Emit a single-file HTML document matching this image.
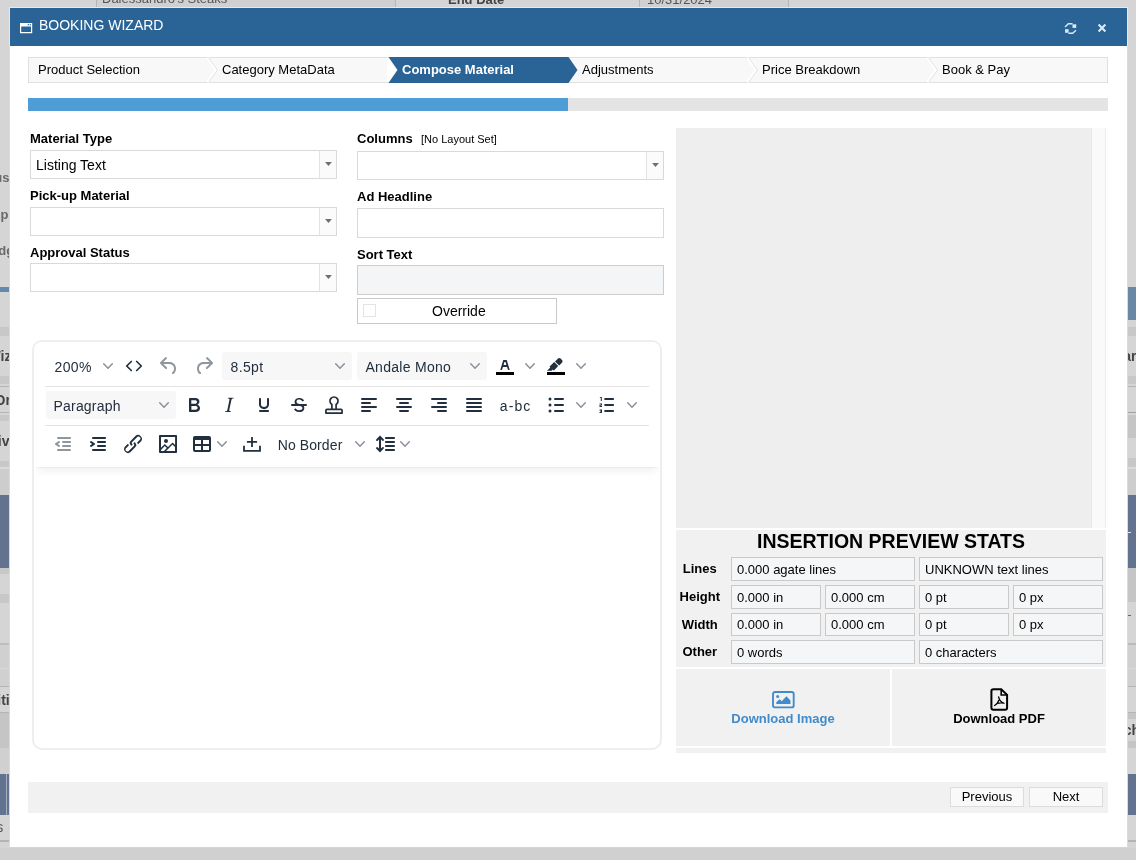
<!DOCTYPE html>
<html>
<head>
<meta charset="utf-8">
<title>Booking Wizard</title>
<style>
*{box-sizing:border-box;margin:0;padding:0}
html,body{width:1136px;height:860px;overflow:hidden}
body{font-family:"Liberation Sans",sans-serif;font-size:13px;color:#000;background:#d5d5d5;position:relative}
.abs{position:absolute}
/* ---------- backdrop ---------- */
#bg{position:absolute;left:0;top:0;width:1136px;height:860px;overflow:hidden;background:#d5d5d5;will-change:transform}
#bg div{position:absolute}
#bg .t{font-weight:bold;color:#444;font-size:14px;line-height:16px;white-space:nowrap}
#bg .n{color:#555;font-size:13px;line-height:16px;white-space:nowrap}
#bg .r{width:100px;text-align:right}
#bg .g{color:#6a6a6a}
#bg .bd{background:#c8c8c8}
#bg .li{background:#b4b4b4}
/* ---------- dialog ---------- */
#dlg{position:absolute;left:9px;top:7px;width:1119px;height:841px;background:#fff;will-change:transform;border:1px solid #dbdbdb;border-right-color:#dbdbdb;border-bottom-color:#d4d4d4}
#dlg>div,#dlg>svg{position:absolute}
/* dialog-relative coords = page coords minus (10,8) */
#title{left:0;top:0;width:1117px;height:38px;background:#2a6496}
#title .txt{position:absolute;left:29px;top:9px;font-size:14px;line-height:16px;color:#fff;white-space:nowrap}
/* steps */
#steps{left:18px;top:49px;width:1080px;height:26px}
#steps .lbl{position:absolute;top:5px;font-size:13px;line-height:16px;white-space:nowrap;color:#000}
/* progress */
#prog{left:18px;top:90px;width:1080px;height:13px;background:#e4e4e4}
#prog i{display:block;width:540px;height:13px;background:#4f9dd7}
/* form */
.lab{font-weight:bold;font-size:13px;line-height:16px;white-space:nowrap}
.sel{height:28px;border:1px solid #d9d9d9;background:#fff}
.sel .v{position:absolute;left:5px;top:6px;font-size:14px;line-height:16px;white-space:nowrap}
.sel .b{position:absolute;right:0;top:0;width:17px;height:27px;border-left:1px solid #e3e3e3;background:#fbfbfb}
.sel .b:after{content:"";position:absolute;left:4.900px;top:10.800px;width:7.200px;height:4.300px;background:#6e6e6e;clip-path:polygon(0 0,100% 0,50% 100%)}
.inp{border:1px solid #d9d9d9;background:#fff}
/* editor */
#ed{left:22px;top:332px;width:630px;height:410px;border:2px solid #eee;border-radius:10px;background:#fff;overflow:hidden}
#edh{position:absolute;left:0;top:0;width:626px;height:125px;background:#fff;box-shadow:0 2px 2px -2px rgba(34,47,62,.1),0 8px 8px -4px rgba(34,47,62,.07)}
#edh>*{position:absolute}
#edh .ln{left:11px;width:604px;height:1px;background:#e3e3e3}
#edh .tx{font-size:14px;line-height:28px;color:#222f3e;white-space:nowrap}
#edh .sb{width:130px;height:28px;background:#f7f7f7;border-radius:3px}
#edh .ic{width:24px;height:24px}
#edh .chv{width:10px;height:10px}
#edh .dis{opacity:.5}
/* stats */
#stats>div{position:absolute;white-space:nowrap}
#stats .h{left:0;top:0px;width:430px;text-align:center;font-weight:bold;font-size:19.500px;line-height:22px}
#stats .sl{left:0;width:47.600px;text-align:center;font-weight:bold;font-size:13px;line-height:16px}
#stats .sv{border:1px solid #c9c9c9;background:#f5f6f8;font-size:13px;line-height:16px;padding:4px 0 0 5px}
.dl{background:#f1f1f1}
.dl .dt{position:absolute;left:0;width:100%;text-align:center;font-weight:bold;font-size:13px;line-height:16px;white-space:nowrap}
.fb{position:absolute;top:5px;width:74px;height:20px;border:1px solid #dcdcdc;background:#f9f9f9;text-align:center;font-size:13px;line-height:18px;white-space:nowrap}
</style>
</head>
<body>
<div id="bg">
<!-- top strip -->
<div style="left:97px;top:0;width:298px;height:7px;background:#d0d0d0"></div>
<div style="left:640px;top:0;width:148px;height:7px;background:#d0d0d0"></div>
<div style="left:96px;top:0;width:1px;height:7px;background:#b6b6b6"></div>
<div style="left:395px;top:0;width:1px;height:7px;background:#b6b6b6"></div>
<div style="left:639px;top:0;width:1px;height:7px;background:#b6b6b6"></div>
<div style="left:788px;top:0;width:1px;height:7px;background:#b6b6b6"></div>
<div class="n" style="left:102px;top:-9.500px">Dalessandro's Steaks</div>
<div class="t" style="left:448px;top:-8.500px;font-size:13px">End Date</div>
<div class="n" style="left:647px;top:-8px">10/31/2024</div>
<!-- left strip (x 0..9) -->
<div class="t r g" style="left:-90.600px;top:169.500px;font-size:13px">Status</div>
<div class="t r g" style="left:-91.600px;top:207px;font-size:13px">Rep</div>
<div class="t g" style="left:-19px;top:242.500px;font-size:13px">Budget</div>
<div style="left:0;top:287px;width:10px;height:5px;background:#6589ac"></div>
<div class="bd" style="left:0;top:327px;width:10px;height:9px"></div>
<div class="t" style="left:-12.600px;top:347.500px">Wizard</div>
<div class="bd" style="left:0;top:376px;width:10px;height:8px"></div>
<div class="li" style="left:0;top:386px;width:10px;height:1px"></div>
<div class="t" style="left:-5.500px;top:391.700px">Order</div>
<div class="li" style="left:0;top:412px;width:10px;height:1px"></div>
<div class="bd" style="left:0;top:415px;width:10px;height:6px"></div>
<div class="t r" style="left:-90.500px;top:432.500px">Div</div>
<div class="bd" style="left:0;top:461px;width:10px;height:6px"></div>
<div style="left:0;top:467px;width:10px;height:2px;background:#dadada"></div>
<div style="left:0;top:469px;width:10px;height:26px;background:#cdcdcd"></div>
<div style="left:0;top:495px;width:10px;height:73px;background:#63738f"></div>
<div class="bd" style="left:0;top:568px;width:10px;height:6px"></div>
<div class="bd" style="left:0;top:594px;width:10px;height:9px"></div>
<div style="left:0;top:643px;width:10px;height:2px;background:#bebebe"></div>
<div style="left:0;top:645px;width:10px;height:41px;background:#d0d0d0"></div>
<div style="left:0;top:668px;width:10px;height:1px;background:#dadada"></div>
<div class="li" style="left:0;top:686px;width:10px;height:1px"></div>
<div class="t r" style="left:-90.300px;top:692px">Editi</div>
<div class="li" style="left:0;top:712px;width:10px;height:1px"></div>
<div class="bd" style="left:0;top:713px;width:10px;height:35px;background:#c5c5c5"></div>
<div style="left:0;top:748px;width:10px;height:26px;background:#d0d0d0"></div>
<div style="left:0;top:774px;width:10px;height:41px;background:#63738f"></div>
<div style="left:6px;top:774px;width:1px;height:41px;background:#a5afc0"></div>
<div class="n" style="left:-30.200px;top:819px;font-size:14px">items ·</div>
<div style="left:0;top:840px;width:10px;height:2px;background:#b4b4b4"></div>
<!-- right strip (x 1128..1136) -->
<div style="left:1127px;top:0;width:9px;height:860px;background:#d5d5d5"></div>
<div style="left:1127px;top:287px;width:9px;height:33px;background:#6a88a6"></div>
<div class="bd" style="left:1127px;top:327px;width:9px;height:9px"></div>
<div class="t" style="left:1111.500px;top:347.500px">Mar</div>
<div class="bd" style="left:1127px;top:376px;width:9px;height:8px"></div>
<div class="li" style="left:1127px;top:386px;width:9px;height:1px"></div>
<div class="li" style="left:1127px;top:412px;width:9px;height:1px;background:#a0a0a0"></div>
<div class="bd" style="left:1127px;top:415px;width:9px;height:23px;background:#c5c5c5"></div>
<div class="bd" style="left:1127px;top:458px;width:9px;height:9px"></div>
<div style="left:1127px;top:467px;width:9px;height:2px;background:#dadada"></div>
<div style="left:1127px;top:469px;width:9px;height:26px;background:#cdcdcd"></div>
<div style="left:1127px;top:495px;width:9px;height:73px;background:#63738f"></div>
<div style="left:1128px;top:532px;width:3px;height:1px;background:#e8e8e8"></div>
<div class="bd" style="left:1127px;top:568px;width:9px;height:34px;background:#c5c5c5"></div>
<div style="left:1128px;top:615px;width:3px;height:1px;background:#666"></div>
<div style="left:1127px;top:643px;width:9px;height:2px;background:#bababa"></div>
<div style="left:1127px;top:645px;width:9px;height:41px;background:#d0d0d0"></div>
<div style="left:1127px;top:668px;width:9px;height:1px;background:#dadada"></div>
<div class="li" style="left:1127px;top:686px;width:9px;height:1px"></div>
<div class="li" style="left:1127px;top:712px;width:9px;height:1px"></div>
<div class="bd" style="left:1127px;top:713px;width:9px;height:6px;background:#c5c5c5"></div>
<div class="t" style="left:1114.500px;top:721.500px">Sch</div>
<div class="bd" style="left:1127px;top:741px;width:9px;height:7px;background:#c5c5c5"></div>
<div style="left:1127px;top:774px;width:9px;height:41px;background:#63738f"></div>
<div style="left:1127px;top:840px;width:9px;height:2px;background:#b4b4b4"></div>
<!-- bottom -->
<div style="left:0;top:848px;width:1136px;height:12px;background:#d0d0d0"></div>
</div>

<div id="dlg">
  <div style="left:-1px;top:-1px;width:1119px;height:39px;border:1px solid #ece8e6;border-bottom:0"></div>
  <div id="title">
    <svg class="abs" style="left:10px;top:15px" width="13" height="11" viewBox="0 0 13 11"><path d="M0 0h12.200v10.200H0zM1.200 3.400v5.600h9.800V3.400z" fill="#fff" fill-rule="evenodd"/><rect x="7.700" y="1.100" width="1.200" height="1.200" fill="#2a6496"/><rect x="9.700" y="1.100" width="1.200" height="1.200" fill="#2a6496"/></svg>
    <div class="txt">BOOKING WIZARD</div>
    <svg class="abs" style="left:1054px;top:14px" width="13" height="13" viewBox="0 0 13 13" fill="none" stroke="#d9ecf5" stroke-width="1.400"><path d="M1 5L4.300 1.800H8.600"/><path d="M12 8.200L8.600 11.300H4.400"/><rect x="8.500" y="2.300" width="3.700" height="3.600" fill="#d9ecf5" stroke="none"/><rect x="1.100" y="7.200" width="3.500" height="3.600" fill="#d9ecf5" stroke="none"/></svg>
    <svg class="abs" style="left:1087px;top:15px" width="10" height="10" viewBox="0 0 10 10" stroke="#d9ecf5" stroke-width="2.100"><path d="M1.600 1.600l6.800 6.800M8.400 1.600l-6.800 6.800"/></svg>
  </div>

  <div id="steps">
    <svg class="abs" style="left:0;top:0" width="1080" height="26" viewBox="0 0 1080 26">
      <rect x="0.500" y="0.500" width="1079" height="25" fill="#f8f8f8" stroke="#e0e0e0"/>
      <g fill="none" stroke="#e0e0e0">
        <path d="M179.500 0.500L188.500 13L179.500 25.500" stroke="#fff" stroke-width="3"/>
        <path d="M180.500 0.500L189.500 13L180.500 25.500"/>
        <path d="M720.500 0.500L729.500 13L720.500 25.500" stroke="#fff" stroke-width="0"/>
        <path d="M719.500 0.500L728.500 13L719.500 25.500" stroke="#fff" stroke-width="3"/>
        <path d="M720.500 0.500L729.500 13L720.500 25.500"/>
        <path d="M899.500 0.500L908.500 13L899.500 25.500" stroke="#fff" stroke-width="3"/>
        <path d="M900.500 0.500L909.500 13L900.500 25.500"/>
      </g>
      <path d="M359 0L368 13L359 26Z" fill="#fff"/>
      <path d="M360.500 0H540.500L549.500 13L540.500 26H360.500L369.500 13Z" fill="#2a6496"/>
    </svg>
    <div class="lbl" style="left:10px">Product Selection</div>
    <div class="lbl" style="left:194px">Category MetaData</div>
    <div class="lbl" style="left:374px;color:#fff;font-weight:bold">Compose Material</div>
    <div class="lbl" style="left:554px">Adjustments</div>
    <div class="lbl" style="left:734px">Price Breakdown</div>
    <div class="lbl" style="left:914px">Book &amp; Pay</div>
  </div>

  <div id="prog"><i></i></div>

  <!-- left column -->
  <div class="lab" style="left:20px;top:123px">Material Type</div>
  <div class="sel" style="left:20px;top:142px;width:307px;height:29px"><span class="v">Listing Text</span><span class="b"></span></div>
  <div class="lab" style="left:20px;top:180px">Pick-up Material</div>
  <div class="sel" style="left:20px;top:199px;width:307px;height:29px"><span class="b"></span></div>
  <div class="lab" style="left:20px;top:237px">Approval Status</div>
  <div class="sel" style="left:20px;top:255px;width:307px;height:29px"><span class="b"></span></div>

  <!-- right column -->
  <div class="lab" style="left:347px;top:123px">Columns</div>
  <div class="abs" style="left:411px;top:124px;font-size:11px;line-height:14px;white-space:nowrap">[No Layout Set]</div>
  <div class="sel" style="left:347px;top:143px;width:307px;height:29px"><span class="b"></span></div>
  <div class="lab" style="left:347px;top:181px">Ad Headline</div>
  <div class="inp" style="left:347px;top:200px;width:307px;height:30px"></div>
  <div class="lab" style="left:347px;top:239px">Sort Text</div>
  <div class="inp" style="left:347px;top:257px;width:307px;height:30px;background:#f4f5f7;border-color:#cdcdcd"></div>
  <div class="inp" style="left:347px;top:290px;width:200px;height:26px;border-color:#c9c9c9">
    <span class="abs" style="left:5px;top:5px;width:13px;height:13px;border:1px solid #e4e4e4;background:#fff"></span>
    <span class="abs" style="left:74px;top:4px;font-size:14px;line-height:16px">Override</span>
  </div>

  <div id="ed">
    <div id="edh">
      <i class="ln" style="top:44px"></i><i class="ln" style="top:83px"></i>
      <!-- row 1 : icon top = 12 -->
      <span class="tx" style="left:20.500px;top:11px;letter-spacing:.4px">200%</span>
      <svg class="chv" style="left:69px;top:19px" viewBox="0 0 10 10"><path d="M0.700 2.750L5 7.150L9.300 2.750" fill="none" stroke="#8b929b" stroke-width="1.500" stroke-linecap="round" stroke-linejoin="round"/></svg>
      <svg class="ic" style="left:88px;top:12px" viewBox="0 0 24 24"><path d="M9.300 7.500L4.700 12l4.600 4.500M14.700 7.500l4.600 4.500-4.600 4.500" fill="none" stroke="#222f3e" stroke-width="1.700" stroke-linecap="round" stroke-linejoin="round"/></svg>
      <svg class="ic dis" style="left:123px;top:12px" viewBox="0 0 24 24"><path fill="#222f3e" d="M6.400 8H12c3.700 0 6.200 2 6.800 5.100.6 2.700-.4 5.600-2.300 6.800a1 1 0 0 1-1-1.800c1.100-.6 1.800-2.700 1.400-4.600-.5-2.100-2.100-3.500-4.900-3.500H6.400l3.300 3.300a1 1 0 1 1-1.400 1.400l-5-5a1 1 0 0 1 0-1.400l5-5a1 1 0 0 1 1.400 1.400L6.400 8Z"/></svg>
      <svg class="ic dis" style="left:158px;top:12px" viewBox="0 0 24 24"><g transform="translate(24 0) scale(-1 1)"><path fill="#222f3e" d="M6.400 8H12c3.700 0 6.200 2 6.800 5.100.6 2.700-.4 5.600-2.300 6.800a1 1 0 0 1-1-1.800c1.100-.6 1.800-2.700 1.400-4.600-.5-2.100-2.100-3.500-4.900-3.500H6.400l3.300 3.300a1 1 0 1 1-1.400 1.400l-5-5a1 1 0 0 1 0-1.400l5-5a1 1 0 0 1 1.400 1.400L6.400 8Z"/></g></svg>
      <span class="sb" style="left:188px;top:10px"></span>
      <span class="tx" style="left:196.500px;top:11px;letter-spacing:.35px">8.5pt</span>
      <svg class="chv" style="left:301px;top:19px" viewBox="0 0 10 10"><path d="M0.700 2.750L5 7.150L9.300 2.750" fill="none" stroke="#8b929b" stroke-width="1.500" stroke-linecap="round" stroke-linejoin="round"/></svg>
      <span class="sb" style="left:323px;top:10px"></span>
      <span class="tx" style="left:331.500px;top:11px;letter-spacing:.28px">Andale Mono</span>
      <svg class="chv" style="left:436px;top:19px" viewBox="0 0 10 10"><path d="M0.700 2.750L5 7.150L9.300 2.750" fill="none" stroke="#8b929b" stroke-width="1.500" stroke-linecap="round" stroke-linejoin="round"/></svg>
      <svg class="ic" style="left:459px;top:12px" viewBox="0 0 24 24"><path d="M3 18h18v3H3z" fill="#000"/><path fill="#222f3e" fill-rule="evenodd" d="M8.700 16h-.8a.5.500 0 0 1-.5-.6l2.700-9c.1-.3.300-.4.500-.4h2.800c.2 0 .4.100.5.400l2.700 9a.5.500 0 0 1-.5.600h-.8a.5.500 0 0 1-.4-.4l-.7-2.200c0-.3-.3-.4-.5-.4h-3.400c-.2 0-.4.100-.5.400l-.7 2.200c0 .3-.2.400-.4.400Zm2.600-7.600-.6 2a.5.500 0 0 0 .5.600h1.600a.5.500 0 0 0 .5-.6l-.6-2c0-.3-.3-.4-.5-.4h-.4c-.2 0-.4.100-.5.400Z"/></svg>
      <svg class="chv" style="left:491px;top:19px" viewBox="0 0 10 10"><path d="M0.700 2.750L5 7.150L9.300 2.750" fill="none" stroke="#8b929b" stroke-width="1.500" stroke-linecap="round" stroke-linejoin="round"/></svg>
      <svg class="ic" style="left:510px;top:12px" viewBox="0 0 24 24"><path d="M3 18h18v3H3z" fill="#000"/><path fill="#222f3e" d="M7.700 16.700H3l3.300-3.300-.7-.8L10.200 8l4 4.100-4 4.200c-.2.200-.6.200-.8 0l-.6-.7-1.100 1.100zm5-7.500L11 7.400l3-2.900a2 2 0 0 1 2.600 0L18 6c.7.700.7 2 0 2.700l-2.900 2.900-1.800-1.800-.5-.6"/></svg>
      <svg class="chv" style="left:542px;top:19px" viewBox="0 0 10 10"><path d="M0.700 2.750L5 7.150L9.300 2.750" fill="none" stroke="#8b929b" stroke-width="1.500" stroke-linecap="round" stroke-linejoin="round"/></svg>

      <!-- row 2 : button top 49, icon top 51 -->
      <span class="sb" style="left:12px;top:49px"></span>
      <span class="tx" style="left:19.500px;top:50px;letter-spacing:.2px">Paragraph</span>
      <svg class="chv" style="left:124.500px;top:58px" viewBox="0 0 10 10"><path d="M0.700 2.750L5 7.150L9.300 2.750" fill="none" stroke="#8b929b" stroke-width="1.500" stroke-linecap="round" stroke-linejoin="round"/></svg>
      <svg class="ic" style="left:148px;top:51px" viewBox="0 0 24 24"><path fill="#222f3e" fill-rule="evenodd" d="M7.800 19c-.3 0-.5 0-.6-.2l-.2-.5V5.700c0-.2 0-.4.200-.5l.6-.2h5c1.500 0 2.700.3 3.500 1 .7.600 1.100 1.400 1.100 2.500a3 3 0 0 1-.6 1.900c-.4.600-1 1-1.600 1.200.4.100.9.300 1.300.6s.8.700 1 1.200c.4.400.5 1 .5 1.600 0 1.300-.4 2.300-1.300 3-.8.700-2.100 1-3.800 1H7.800Zm5-8.300c.6 0 1.200-.1 1.600-.5.400-.3.600-.7.600-1.300 0-1.100-.8-1.700-2.300-1.700H9.300v3.500h3.400Zm.5 6c.7 0 1.300-.1 1.700-.4.400-.4.600-.9.600-1.500s-.2-1-.7-1.400c-.4-.3-1-.4-2-.4H9.400v3.800h4Z"/></svg>
      <svg class="ic" style="left:183px;top:51px" viewBox="0 0 24 24"><path fill="#222f3e" fill-rule="evenodd" d="m16.700 4.700-.1.900h-.3c-.6 0-1 0-1.400.3-.3.300-.4.600-.5 1.100l-2.100 9.800v.6c0 .5.400.8 1.400.8h.2l-.2.800H8l.2-.8h.2c1.100 0 1.800-.5 2-1.500l2-9.800.1-.5c0-.6-.4-.8-1.400-.8h-.3l.2-.9h5.800Z"/></svg>
      <svg class="ic" style="left:218px;top:51px" viewBox="0 0 24 24"><path fill="#222f3e" fill-rule="evenodd" d="M16 5c.6 0 1 .4 1 1v5.500a4 4 0 0 1-.4 1.800l-1 1.400a5.300 5.300 0 0 1-5.500 1 5 5 0 0 1-1.600-1c-.5-.4-.8-.9-1.100-1.400a4 4 0 0 1-.4-1.800V6c0-.6.400-1 1-1s1 .4 1 1v5.500c0 .3 0 .6.200 1l.6.700a3.300 3.300 0 0 0 2.200.8 3.400 3.400 0 0 0 2.200-.8c.3-.2.400-.5.600-.8l.2-.9V6c0-.6.400-1 1-1ZM8 17h8c.6 0 1 .4 1 1s-.4 1-1 1H8a1 1 0 0 1 0-2Z"/></svg>
      <svg class="ic" style="left:253px;top:51px" viewBox="0 0 24 24"><g fill="#222f3e"><path d="M15.600 8.500c-.5-.7-1-1.100-1.300-1.300-.6-.4-1.300-.6-2-.6-2.700 0-2.800 1.700-2.800 2.100 0 1.600 1.800 2 3.200 2.300 4.400.9 4.600 2.800 4.600 3.900 0 1.400-.7 4.100-5 4.100A6.200 6.200 0 0 1 7 16.400l1.500-1.100c.4.600 1.600 2 3.700 2 1.600 0 2.500-.4 3-1.200.4-.8.3-2-.8-2.600-.7-.4-1.600-.7-2.900-1-1-.2-3.900-.8-3.900-3.600C7.600 6 10.300 5 12.400 5c2.900 0 4.200 1.600 4.700 2.400l-1.500 1.100Z"/><path d="M5 11h14a1 1 0 0 1 0 2H5a1 1 0 0 1 0-2Z"/></g></svg>
      <svg class="ic" style="left:288px;top:51px" viewBox="0 0 24 24"><g fill="none" stroke="#222f3e" stroke-width="1.700" stroke-linejoin="round"><path d="M9.900 16.400V11.500A4.050 4.050 0 1 1 14.100 11.500V16.400"/><path d="M3.900 20.100V17.500Q3.900 16.400 5 16.400H19Q20.100 16.400 20.100 17.500V20.100Z"/></g></svg>
      <svg class="ic" style="left:323px;top:51px" viewBox="0 0 24 24"><g fill="#222f3e"><rect x="4" y="5" width="16" height="2" rx="1"/><rect x="4" y="9" width="10" height="2" rx="1"/><rect x="4" y="13" width="16" height="2" rx="1"/><rect x="4" y="17" width="10" height="2" rx="1"/></g></svg>
      <svg class="ic" style="left:358px;top:51px" viewBox="0 0 24 24"><g fill="#222f3e"><rect x="4" y="5" width="16" height="2" rx="1"/><rect x="7" y="9" width="10" height="2" rx="1"/><rect x="4" y="13" width="16" height="2" rx="1"/><rect x="7" y="17" width="10" height="2" rx="1"/></g></svg>
      <svg class="ic" style="left:393px;top:51px" viewBox="0 0 24 24"><g fill="#222f3e"><rect x="4" y="5" width="16" height="2" rx="1"/><rect x="10" y="9" width="10" height="2" rx="1"/><rect x="4" y="13" width="16" height="2" rx="1"/><rect x="10" y="17" width="10" height="2" rx="1"/></g></svg>
      <svg class="ic" style="left:428px;top:51px" viewBox="0 0 24 24"><g fill="#222f3e"><rect x="4" y="5" width="16" height="2" rx="1"/><rect x="4" y="9" width="16" height="2" rx="1"/><rect x="4" y="13" width="16" height="2" rx="1"/><rect x="4" y="17" width="16" height="2" rx="1"/></g></svg>
      <span class="tx" style="left:465.800px;top:50px;letter-spacing:1.100px">a-bc</span>
      <svg class="ic" style="left:509.600px;top:51px" viewBox="0 0 24 24"><g fill="#222f3e"><rect x="10" y="5" width="10" height="2" rx="1"/><rect x="10" y="11" width="10" height="2" rx="1"/><rect x="10" y="17" width="10" height="2" rx="1"/><circle cx="6" cy="6" r="1.500"/><circle cx="6" cy="12" r="1.500"/><circle cx="6" cy="18" r="1.500"/></g></svg>
      <svg class="chv" style="left:542px;top:58px" viewBox="0 0 10 10"><path d="M0.700 2.750L5 7.150L9.300 2.750" fill="none" stroke="#8b929b" stroke-width="1.500" stroke-linecap="round" stroke-linejoin="round"/></svg>
      <svg class="ic" style="left:560.600px;top:51px" viewBox="0 0 24 24"><g fill="#222f3e"><rect x="9.100" y="5" width="10" height="2" rx="1"/><rect x="9.100" y="11" width="10" height="2" rx="1"/><rect x="9.100" y="17" width="10" height="2" rx="1"/><path d="M5.800 4h1v4H5.800V5H4.800V4.500zM4.500 10.500h2.500v2h-1.500v.5h1.500v1H4.500v-2H6v-.5H4.500zM4.500 16.500H7v3.500H4.500v-1H6v-.4H5v-.8h1v-.4H4.500z"/></g></svg>
      <svg class="chv" style="left:593px;top:58px" viewBox="0 0 10 10"><path d="M0.700 2.750L5 7.150L9.300 2.750" fill="none" stroke="#8b929b" stroke-width="1.500" stroke-linecap="round" stroke-linejoin="round"/></svg>

      <!-- row 3 : button top 88, icon top 90 -->
      <svg class="ic dis" style="left:17px;top:90px" viewBox="0 0 24 24"><path fill="#222f3e" fill-rule="evenodd" d="M7 5h12c.6 0 1 .4 1 1s-.4 1-1 1H7a1 1 0 1 1 0-2Zm5 4h7c.6 0 1 .4 1 1s-.4 1-1 1h-7a1 1 0 0 1 0-2Zm0 4h7c.6 0 1 .4 1 1s-.4 1-1 1h-7a1 1 0 0 1 0-2Zm-5 4h12a1 1 0 0 1 0 2H7a1 1 0 0 1 0-2Zm1.600-3.800a1 1 0 0 1-1.200 1.600l-3-2a1 1 0 0 1 0-1.600l3-2a1 1 0 0 1 1.200 1.600L6.800 12l1.800 1.200Z"/></svg>
      <svg class="ic" style="left:52px;top:90px" viewBox="0 0 24 24"><path fill="#222f3e" fill-rule="evenodd" d="M7 5h12c.6 0 1 .4 1 1s-.4 1-1 1H7a1 1 0 1 1 0-2Zm5 4h7c.6 0 1 .4 1 1s-.4 1-1 1h-7a1 1 0 0 1 0-2Zm0 4h7c.6 0 1 .4 1 1s-.4 1-1 1h-7a1 1 0 0 1 0-2Zm-5 4h12a1 1 0 0 1 0 2H7a1 1 0 0 1 0-2Zm-2.600-3.800L6.200 12l-1.800-1.200a1 1 0 0 1 1.200-1.600l3 2a1 1 0 0 1 0 1.600l-3 2a1 1 0 1 1-1.200-1.600Z"/></svg>
      <svg class="ic" style="left:87px;top:90px" viewBox="0 0 24 24"><path fill="#222f3e" d="M6.200 12.300a1 1 0 0 1 1.400 1.400l-2 2a2 2 0 1 0 2.600 2.800l4.800-4.800a1 1 0 0 0 0-1.400 1 1 0 1 1 1.400-1.300 2.900 2.900 0 0 1 0 4L9.600 20a3.900 3.900 0 0 1-5.500-5.500l2-2Zm11.600-.6a1 1 0 0 1-1.400-1.400l2-2a2 2 0 1 0-2.600-2.800L11 10.300a1 1 0 0 0 0 1.400A1 1 0 1 1 9.600 13a2.900 2.900 0 0 1 0-4L14.400 4a3.900 3.900 0 0 1 5.500 5.500l-2 2Z"/></svg>
      <svg class="ic" style="left:122px;top:90px" viewBox="0 0 24 24"><path fill="#222f3e" fill-rule="evenodd" d="m5 15.700 3.300-3.200c.3-.3.700-.3 1 0L12 15l4.100-4c.3-.4.800-.4 1 0l2 1.900V5H5v10.700ZM5 18V19h3l2.800-2.900-2-2L5 17.900Zm14-3-2.500-2.400-6.400 6.500H19v-4ZM4 3h16c.6 0 1 .4 1 1v16c0 .6-.4 1-1 1H4a1 1 0 0 1-1-1V4c0-.6.400-1 1-1Zm6 8a2 2 0 1 0 0-4 2 2 0 0 0 0 4Z"/></svg>
      <svg class="ic" style="left:156px;top:90px" viewBox="0 0 24 24"><path fill="#222f3e" fill-rule="evenodd" d="M19 4a2 2 0 0 1 2 2v12a2 2 0 0 1-2 2H5a2 2 0 0 1-2-2V6c0-1.100.9-2 2-2h14ZM5 14v4h6v-4H5Zm14 0h-6v4h6v-4Zm0-6h-6v4h6V8ZM5 12h6V8H5v4Z"/></svg>
      <svg class="chv" style="left:183px;top:97px" viewBox="0 0 10 10"><path d="M0.700 2.750L5 7.150L9.300 2.750" fill="none" stroke="#8b929b" stroke-width="1.500" stroke-linecap="round" stroke-linejoin="round"/></svg>
      <svg class="ic" style="left:206px;top:90px" viewBox="0 0 24 24"><path d="M4 14.700V18.900H20V14.700M12 5.800V14M7.800 9.900H16.200" fill="none" stroke="#222f3e" stroke-width="1.800" stroke-linecap="square"/></svg>
      <span class="tx" style="left:243.700px;top:89px;letter-spacing:.1px">No Border</span>
      <svg class="chv" style="left:321px;top:97px" viewBox="0 0 10 10"><path d="M0.700 2.750L5 7.150L9.300 2.750" fill="none" stroke="#8b929b" stroke-width="1.500" stroke-linecap="round" stroke-linejoin="round"/></svg>
      <svg class="ic" style="left:339px;top:90px" viewBox="0 0 24 24"><path fill="#222f3e" d="M21 5a1 1 0 0 1 .1 2H13a1 1 0 0 1-.1-2H21zm0 4a1 1 0 0 1 .1 2H13a1 1 0 0 1-.1-2H21zm0 4a1 1 0 0 1 .1 2H13a1 1 0 0 1-.1-2H21zm0 4a1 1 0 0 1 .1 2H13a1 1 0 0 1-.1-2H21zM7 3.600l3.700 3.700a1 1 0 0 1-1.300 1.500h-.1L8 7.300v9.200l1.300-1.300a1 1 0 0 1 1.300 0h.1c.4.400.4 1 0 1.300v.1L7 20.400l-3.700-3.700a1 1 0 0 1 1.300-1.500h.1L6 16.500V7.400L4.700 8.700a1 1 0 0 1-1.300 0h-.1a1 1 0 0 1 0-1.300v-.1L7 3.600z"/></svg>
      <svg class="chv" style="left:366px;top:97px" viewBox="0 0 10 10"><path d="M0.700 2.750L5 7.150L9.300 2.750" fill="none" stroke="#8b929b" stroke-width="1.500" stroke-linecap="round" stroke-linejoin="round"/></svg>
    </div>
  </div>
  <!--EDITOR-->
  <!-- preview area (page 676..1106 x 128..528) -->
  <div style="left:666px;top:120px;width:415px;height:400px;background:#eee"></div>
  <div style="left:1081px;top:120px;width:15px;height:400px;background:#fafafa;border-left:1px solid #e8e8e8;border-right:1px solid #ececec"></div>
  <!-- stats (page 676..1106 x 530..667) -->
  <div id="stats" style="left:666px;top:522px;width:430px;height:137px;background:#f1f1f1">
    <div class="h">INSERTION PREVIEW STATS</div>
    <div class="sl" style="top:30.500px">Lines</div>
    <div class="sl" style="top:59px">Height</div>
    <div class="sl" style="top:87px">Width</div>
    <div class="sl" style="top:113.600px">Other</div>
    <div class="sv" style="left:55px;top:27px;width:184px;height:23.500px">0.000 agate lines</div>
    <div class="sv" style="left:243px;top:27px;width:184px;height:23.500px">UNKNOWN text lines</div>
    <div class="sv" style="left:55px;top:55px;width:90px;height:23.500px">0.000 in</div>
    <div class="sv" style="left:149px;top:55px;width:90px;height:23.500px">0.000 cm</div>
    <div class="sv" style="left:243px;top:55px;width:90px;height:23.500px">0 pt</div>
    <div class="sv" style="left:337px;top:55px;width:90px;height:23.500px">0 px</div>
    <div class="sv" style="left:55px;top:83px;width:90px;height:22.500px;padding-top:3px">0.000 in</div>
    <div class="sv" style="left:149px;top:83px;width:90px;height:22.500px;padding-top:3px">0.000 cm</div>
    <div class="sv" style="left:243px;top:83px;width:90px;height:22.500px;padding-top:3px">0 pt</div>
    <div class="sv" style="left:337px;top:83px;width:90px;height:22.500px;padding-top:3px">0 px</div>
    <div class="sv" style="left:55px;top:110px;width:184px;height:24px;padding-top:3.500px">0 words</div>
    <div class="sv" style="left:243px;top:110px;width:184px;height:24px;padding-top:3.500px">0 characters</div>
  </div>
  <!-- download buttons (page y 669..746) -->
  <div class="dl" style="left:666px;top:661px;width:214px;height:77px;color:#428bca">
    <svg class="abs" style="left:96px;top:21.500px" width="23" height="18" viewBox="0 0 23 18"><rect x="1" y="1" width="20.700" height="15.400" rx="2" fill="none" stroke="#428bca" stroke-width="1.900"/><circle cx="5.700" cy="5.500" r="1.500" fill="#428bca"/><path d="M4.300 13V11.200L7.600 8.300L9.800 10.300L14.400 5.200L18.500 9.600V13Z" fill="#428bca"/></svg>
    <div class="dt" style="top:42px">Download Image</div>
  </div>
  <div class="dl" style="left:882px;top:661px;width:214px;height:77px;color:#000">
    <svg class="abs" style="left:98px;top:18.500px" width="19" height="23" viewBox="0 0 19 24" preserveAspectRatio="none"><path d="M3.400 1.300H11.200L17.100 7.200V20.700Q17.100 22.700 15.100 22.700H3.400Q1.400 22.700 1.400 20.700V3.300Q1.400 1.300 3.400 1.300Z" fill="none" stroke="#000" stroke-width="2"/><path d="M11.200 1.300V7.200H17.100" fill="none" stroke="#000" stroke-width="1.600"/><path d="M8.600 9.200C9 11.500 10.500 14.500 14 15.900M8.800 12.800C8 15.500 6.300 17.400 4.600 18.300M6.800 16.200C9 15.400 11.500 15.200 13.800 15.700" fill="none" stroke="#000" stroke-width="1.300" stroke-linecap="round"/></svg>
    <div class="dt" style="top:42px">Download PDF</div>
  </div>
  <div style="left:666px;top:740px;width:430px;height:5px;background:#f1f1f1"></div>
  <!--RIGHT-->
  <!-- footer (page 28..1108 x 782..813) -->
  <div style="left:18px;top:774px;width:1080px;height:31px;background:#f1f1f1">
    <div class="fb" style="left:922px">Previous</div>
    <div class="fb" style="left:1001px">Next</div>
  </div>
  <!--FOOTER-->
</div>
</body>
</html>
